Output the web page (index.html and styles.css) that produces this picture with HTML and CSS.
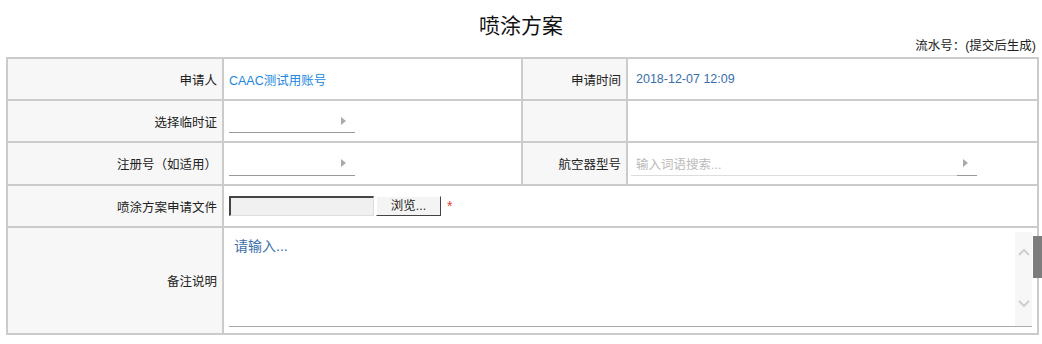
FILE: index.html
```html
<!DOCTYPE html>
<html lang="zh-CN">
<head>
  <meta charset="UTF-8" />
  <title>喷涂方案</title>
  <link rel="stylesheet" href="styles.css">
</head>
<body>
  <div class="page">
    <h1 class="title">喷涂方案</h1>
    <div class="serial">流水号：(提交后生成)</div>

    <table class="form-table">
      <colgroup>
        <col class="col-label1">
        <col class="col-value1">
        <col class="col-label2">
        <col class="col-value2">
      </colgroup>
      <tr class="row-normal">
        <th>申请人</th>
        <td><span class="applicant">CAAC测试用账号</span></td>
        <th>申请时间</th>
        <td class="cell-right"><span class="date">2018-12-07 12:09</span></td>
      </tr>
      <tr class="row-normal">
        <th>选择临时证</th>
        <td>
          <div class="combo"><span class="arrow"></span></div>
        </td>
        <th></th>
        <td class="cell-right"></td>
      </tr>
      <tr class="row-tall">
        <th>注册号（如适用）</th>
        <td>
          <div class="combo"><span class="arrow"></span></div>
        </td>
        <th>航空器型号</th>
        <td class="cell-right">
          <div class="search">
            <div class="search-input">输入词语搜索...</div>
            <div class="search-btn"><span class="arrow"></span></div>
          </div>
        </td>
      </tr>
      <tr class="row-normal">
        <th>喷涂方案申请文件</th>
        <td colspan="3">
          <div class="file-wrap">
            <div class="file-box"></div>
            <div class="file-btn">浏览...</div>
            <span class="required">*</span>
          </div>
        </td>
      </tr>
      <tr class="row-remark">
        <th>备注说明</th>
        <td colspan="3" class="cell-remark">
          <div class="remark">
            <div class="remark-text">请输入...</div>
            <div class="remark-scroll">
              <svg width="12" height="8" viewBox="0 0 12 8"><path d="M1 7 L6 2 L11 7" fill="none" stroke="#cfcfcf" stroke-width="2"/></svg>
              <svg width="12" height="8" viewBox="0 0 12 8"><path d="M1 1 L6 6 L11 1" fill="none" stroke="#cfcfcf" stroke-width="2"/></svg>
            </div>
          </div>
        </td>
      </tr>
    </table>

    <div class="page-thumb"></div>
  </div>
</body>
</html>
```

FILE: styles.css
```css
* {
  box-sizing: border-box;
}

html, body {
  margin: 0;
  padding: 0;
  background: #fff;
  font-family: "Liberation Sans", "Noto Sans CJK SC", sans-serif;
  color: #222;
}

.page {
  position: relative;
  width: 1042px;
  height: 344px;
  overflow: hidden;
}

.title {
  margin: 0;
  padding-top: 14px;
  font-size: 21px;
  line-height: 24px;
  font-weight: normal;
  text-align: center;
  color: #111;
}

.serial {
  font-size: 12.5px;
  line-height: 16px;
  text-align: right;
  padding-right: 6px;
  margin-bottom: 3px;
}

.form-table {
  margin-left: 6px;
  width: 1031px;
  border-collapse: collapse;
  table-layout: fixed;
  font-size: 12.5px;
}

.col-label1 { width: 216px; }
.col-value1 { width: 299px; }
.col-label2 { width: 105px; }
.col-value2 { width: 411px; }

.form-table th,
.form-table td {
  border: 2px solid #cbcbcb;
  padding: 0 5px;
}

.form-table th {
  background: #f7f7f7;
  font-weight: normal;
  text-align: right;
  color: #222;
}

.form-table td.cell-right {
  padding-left: 3px;
}

.row-normal { height: 42px; }
.row-tall { height: 43px; }
.row-remark { height: 107px; }

.applicant {
  color: #2187e0;
}

.date {
  padding-left: 5px;
  color: #3a6ea8;
}

.arrow {
  display: inline-block;
  width: 0;
  height: 0;
  border-left: 5px solid #aaa;
  border-top: 4px solid transparent;
  border-bottom: 4px solid transparent;
}

.combo {
  width: 126px;
  height: 24px;
  border-bottom: 1px solid #999;
  display: flex;
  align-items: center;
  justify-content: flex-end;
  padding-right: 9px;
}

.search {
  display: flex;
  width: 346px;
  height: 24px;
}

.search-input {
  flex: 1;
  border-bottom: 1px solid #ddd;
  color: #bbb;
  padding-left: 5px;
  display: flex;
  align-items: center;
}

.search-btn {
  width: 20px;
  border-bottom: 1px solid #999;
  display: flex;
  align-items: center;
  padding-left: 6px;
}

.file-wrap {
  display: flex;
  align-items: center;
}

.file-box {
  width: 145px;
  height: 20px;
  background: #f0f0f0;
  border-top: 2px solid #444;
  border-left: 2px solid #444;
  border-right: 1px solid #ddd;
  border-bottom: 1px solid #ddd;
}

.file-btn {
  width: 65px;
  height: 20px;
  margin-left: 2px;
  background: #f4f4f4;
  border-top: 1px solid #fff;
  border-left: 1px solid #fff;
  border-right: 1px solid #444;
  border-bottom: 1px solid #444;
  text-align: center;
  line-height: 18px;
  color: #222;
}

.required {
  color: #e53935;
  margin-left: 6px;
  font-size: 14px;
  line-height: 14px;
}

.cell-remark {
  vertical-align: top;
  padding-top: 4px !important;
}

.remark {
  display: flex;
  height: 95px;
  border-bottom: 1px solid #aaa;
}

.remark-text {
  flex: 1;
  padding: 3px 0 0 5px;
  font-size: 14px;
  line-height: 22px;
  color: #3a6ea8;
}

.remark-scroll {
  width: 17px;
  background: #f7f7f7;
  display: flex;
  flex-direction: column;
  align-items: center;
  justify-content: space-between;
  padding: 16px 0 18px;
}

.page-thumb {
  position: absolute;
  left: 1033px;
  top: 236px;
  width: 9px;
  height: 42px;
  background: #7d7d7d;
}
```
